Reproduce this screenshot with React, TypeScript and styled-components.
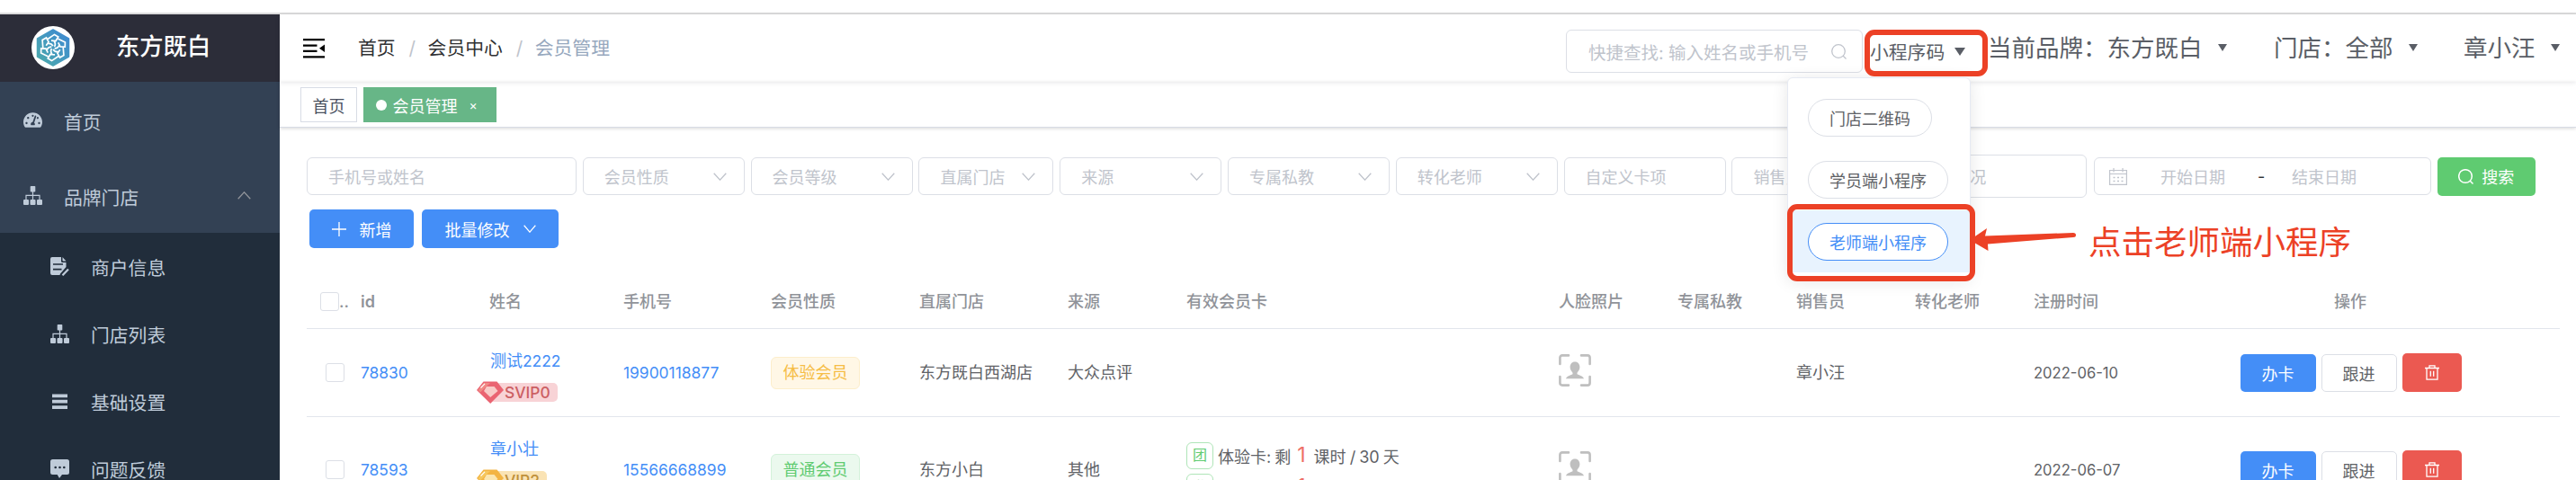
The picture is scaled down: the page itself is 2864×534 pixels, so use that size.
import type { ReactNode } from 'react';
import styled, { createGlobalStyle } from 'styled-components';
import { FaTachometerAlt } from 'react-icons/fa';

const GlobalStyle = createGlobalStyle`
  * {
    box-sizing: border-box;
  }
  body {
    margin: 0;
    background: #fff;
    font-family: Inter, 'Noto Sans CJK SC', sans-serif;
    font-size: 18px;
    color: #606266;
  }
  button {
    font-family: inherit;
  }
`;

const Page = styled.div`
  position: relative;
  width: 2864px;
  height: 534px;
  overflow: hidden;
  padding-top: 14px;
  white-space: nowrap;
`;

const Frame = styled.div`
  display: flex;
  height: 520px;
  border-top: 2px solid #dcdcdc;
`;

const Sidebar = styled.aside`
  width: 311px;
  flex: none;
  background: #212d3b;
`;

const Brand = styled.div`
  height: 75px;
  padding: 0 0 2px 35px;
  display: flex;
  align-items: center;
  gap: 46px;
  background: #2c2d39;
`;

const BrandName = styled.span`
  font-size: 26.3px;
  font-weight: 500;
  line-height: 36px;
  color: #fff;
  padding-bottom: 1px;
`;

const MenuItem = styled.div<{ $sub?: boolean }>`
  height: ${(p) => (p.$sub ? 75 : 84)}px;
  padding: 0 32px 0 ${(p) => (p.$sub ? 56 : 26)}px;
  display: flex;
  align-items: center;
  gap: 24px;
  background: ${(p) => (p.$sub ? '#212d3b' : '#334154')};
  color: #bfcbd9;
  font-size: 20.8px;

  svg {
    flex: none;
  }
`;

const MenuText = styled.span<{ $sub?: boolean }>`
  flex: 1;
  line-height: 30px;
  padding-top: ${(p) => (p.$sub ? 5 : 7)}px;
`;

const Main = styled.main`
  flex: 1;
  min-width: 0;
`;

const Navbar = styled.header`
  height: 75px;
  padding: 0 17px 0 26px;
  display: flex;
  align-items: center;
  box-shadow: 0 1px 5px rgba(0, 21, 41, 0.1);
`;

const Breadcrumb = styled.nav`
  display: flex;
  align-items: center;
  gap: 15px;
  margin-left: 37px;
  flex: 1;
  font-size: 20.8px;
  line-height: 30px;
  color: #303133;
`;

const Slash = styled.span`
  width: 6px;
  color: #c0c4cc;
  text-align: center;
`;

const Current = styled.span`
  color: #97a8be;
`;

const QuickSearch = styled.div`
  width: 330px;
  height: 48px;
  margin: 7px 8px 0 0;
  padding: 0 17px 0 24px;
  display: flex;
  align-items: center;
  justify-content: space-between;
  border: 1px solid #dcdfe6;
  border-radius: 6px;
  color: #c0c4cc;
  font-size: 19.5px;
`;

const CodeMenu = styled.div`
  position: relative;
  width: 131px;
  height: 48px;
  margin-top: 7px;
  display: flex;
  align-items: center;
  gap: 11px;
  font-size: 20.8px;
  color: #5a5e66;
`;

const Picker = styled.div<{ $width: number }>`
  width: ${(p) => p.$width}px;
  display: flex;
  align-items: center;
  gap: 17px;
  font-size: 26.5px;
  line-height: 38px;
  color: #5a5e66;
  padding-bottom: 2px;
`;

const Caret = styled.i<{ $size?: number }>`
  border: ${(p) => p.$size || 5.5}px solid transparent;
  border-top: ${(p) => (p.$size ? 9 : 8)}px solid currentColor;
  border-bottom: 0;
`;

const Dropdown = styled.div`
  position: absolute;
  z-index: 5;
  top: 53px;
  left: -92px;
  width: 204px;
  height: 224px;
  padding: 9px 0;
  display: flex;
  flex-direction: column;
  background: #fff;
  border: 1px solid #e6eaf3;
  border-radius: 6px;
  box-shadow: 0 3px 18px rgba(0, 0, 0, 0.1);
`;

const DropdownItem = styled.div<{ $active?: boolean }>`
  flex: none;
  height: 69px;
  padding: 14px 0 0 22px;
  background: ${(p) => (p.$active ? '#e8f3fe' : 'transparent')};
`;

const Pill = styled.button<{ $active?: boolean }>`
  display: block;
  height: 42px;
  padding: 0 23px 1px;
  border: 1px solid ${(p) => (p.$active ? '#448ef7' : '#dcdfe6')};
  border-radius: 21px;
  background: #fff;
  color: ${(p) => (p.$active ? '#448ef7' : '#606266')};
  font-size: 18px;
`;

const TagsBar = styled.div`
  height: 51px;
  padding: 6px 0 0 23px;
  display: flex;
  gap: 7px;
  border-bottom: 1px solid #d8dce5;
  box-shadow: 0 1px 4px rgba(0, 0, 0, 0.16);
`;

const Tag = styled.div<{ $active?: boolean }>`
  height: 39px;
  padding: 0 12.5px 0;
  display: flex;
  align-items: center;
  gap: 7px;
  border: 1px solid ${(p) => (p.$active ? '#67b687' : '#d8dce5')};
  background: ${(p) => (p.$active ? '#67b687' : '#fff')};
  color: ${(p) => (p.$active ? '#fff' : '#495060')};
`;

const Dot = styled.i`
  width: 12px;
  height: 12px;
  border-radius: 50%;
  background: #fff;
`;

const Close = styled.span`
  width: 23px;
  padding-left: 6px;
  font-size: 14px;
`;

const Filters = styled.div`
  height: 48px;
  margin: 30px 0 0 30px;
  display: flex;
  align-items: center;
  gap: 6.8px;
`;

const Field = styled.div<{ $width: number; $tall?: boolean }>`
  flex: none;
  width: ${(p) => p.$width}px;
  height: ${(p) => (p.$tall ? 48 : 42)}px;
  padding: 0 19px 0 23px;
  display: flex;
  align-items: center;
  justify-content: space-between;
  border: 1px solid #dcdfe6;
  border-radius: 6px;
  color: #c0c4cc;
`;

const DateRange = styled(Field)`
  justify-content: flex-start;
  margin-left: 1px;
  padding-left: 16px;
`;

const DateText = styled.span`
  padding-left: 37px;
`;

const Dash = styled.span`
  width: 38px;
  margin-left: 36px;
  color: #303133;
`;

const Button = styled.button<{ $kind?: 'primary' | 'success' | 'danger'; $width: number; $height?: number }>`
  width: ${(p) => p.$width}px;
  height: ${(p) => p.$height || 43}px;
  padding: 0;
  display: flex;
  align-items: center;
  justify-content: center;
  gap: 9px;
  border: ${(p) => (p.$kind ? 'none' : '1px solid #dcdfe6')};
  border-radius: 5px;
  background: ${(p) =>
    p.$kind === 'primary'
      ? '#448ef7'
      : p.$kind === 'success'
        ? '#5fcb71'
        : p.$kind === 'danger'
          ? '#eb5951'
          : '#fff'};
  color: ${(p) => (p.$kind ? '#fff' : '#606266')};
  font-size: 18px;
`;

const Actions = styled.div`
  display: flex;
  gap: 9px;
  margin: 13px 0 0 33px;

  button {
    gap: 15px;
  }
`;

const Table = styled.div`
  width: 2505px;
  margin: 30px 0 0 30px;
`;

const Row = styled.div<{ $height: number }>`
  height: ${(p) => p.$height}px;
  display: grid;
  grid-template-columns: 45px 143px 149px 164px 165px 165px 132px 414px 132px 132px 132px 132px 132px 468px;
  align-items: center;
  border-bottom: 1px solid #e2e5ec;
`;

const HeadRow = styled(Row)`
  font-weight: 500;
  color: #909399;
`;

const Cell = styled.div<{ $center?: boolean }>`
  padding-left: ${(p) => (p.$center ? 2 : 15)}px;
  text-align: ${(p) => (p.$center ? 'center' : 'left')};
  line-height: 28px;
`;

const IdLabel = styled.span`
  font-weight: 600;
`;

const CheckCell = styled.div<{ $left: number }>`
  display: flex;
  align-items: center;
  padding-left: ${(p) => p.$left}px;
`;

const Checkbox = styled.i`
  flex: none;
  width: 21px;
  height: 21px;
  border: 1px solid #dcdfe6;
  border-radius: 3px;
`;

const Digits = styled.span<{ $link?: boolean }>`
  font-size: ${(p) => (p.$link ? 17.4 : 16.6)}px;
  color: ${(p) => (p.$link ? '#448ef7' : 'inherit')};
`;

const NameCell = styled.div`
  align-self: start;
  padding: 22px 0 0 1px;
  display: flex;
  flex-direction: column;
  gap: 8px;
  color: #448ef7;
`;

const Name = styled.span`
  padding-left: 15px;
  line-height: 28px;
`;

const Badge = styled.div`
  display: flex;
  align-items: center;
  height: 25px;
`;

const BadgeText = styled.span<{ $gold: boolean }>`
  height: 21px;
  margin-left: -16px;
  padding: 0 8px 0 17px;
  border-radius: 5px;
  background: ${(p) => (p.$gold ? '#fae3b4' : '#f8d3d6')};
  color: ${(p) => (p.$gold ? '#c0913c' : '#cc5f63')};
  font-size: 17.4px;
  font-weight: 500;
  line-height: 21px;
`;

const Status = styled.span<{ $ok: boolean }>`
  display: block;
  width: 99px;
  height: 36px;
  border: 1px solid ${(p) => (p.$ok ? '#d3f2da' : '#fdeecb')};
  border-radius: 6px;
  background: ${(p) => (p.$ok ? '#ebf9ee' : '#fff7e6')};
  color: ${(p) => (p.$ok ? '#5fcb71' : '#f6bd45')};
  line-height: 34px;
  text-align: center;
`;

const CardLines = styled.div`
  align-self: start;
  padding: 28px 0 0 15px;
  display: flex;
  flex-direction: column;
  gap: 5px;
`;

const CardLine = styled.div`
  display: flex;
  align-items: center;
  height: 30px;
  word-spacing: -1px;
`;

const CardType = styled.span`
  width: 30px;
  height: 30px;
  margin-right: 5px;
  border: 1px solid #afe5b8;
  border-radius: 6px;
  color: #5fcb71;
  font-size: 16px;
  line-height: 27px;
  text-align: center;
`;

const Count = styled.b`
  margin: 0 9px 3px 7px;
  color: #ee6f68;
  font-size: 23px;
  font-weight: 400;
`;

const Operations = styled.div`
  display: flex;
  align-items: center;
  justify-content: center;
  gap: 6px;
  padding-left: 3px;
`;

const Marker = styled.div<{ $x: number; $y: number; $w: number; $h: number }>`
  position: absolute;
  z-index: 6;
  left: ${(p) => p.$x}px;
  top: ${(p) => p.$y}px;
  width: ${(p) => p.$w}px;
  height: ${(p) => p.$h}px;
  border: 6px solid #ec4126;
  border-radius: 11px;
`;

const Pointer = styled.svg`
  position: absolute;
  z-index: 7;
  left: 2188px;
  top: 250px;
`;

const Note = styled.div`
  position: absolute;
  left: 2322px;
  top: 246px;
  font-size: 36.5px;
  line-height: 48px;
  color: #ec4126;
`;

const Logo = () => (
  <svg width="48" height="48" viewBox="-24 -24 48 48">
    <defs>
      <linearGradient id="logo" x1="0" y1="1" x2="1" y2="0">
        <stop offset="0.1" stopColor="#4ba8ae" />
        <stop offset="0.9" stopColor="#3f8bd0" />
      </linearGradient>
    </defs>
    <circle r="24" fill="#fff" />
    <path d="M0-20 17.5-10V10L0 20-17.5 10V-10Z" fill="url(#logo)" stroke="url(#logo)" strokeWidth="1.5" strokeLinejoin="round" />
    {[0, 60, 120, 180, 240, 300].map((a) => (
      <path
        key={a}
        d="M-6-9.5 1.5-14.6 5.8-12 3-7.5-2-7.8M1.5-1Q3.5-4 1-7.5"
        transform={`rotate(${a})`}
        fill="none"
        stroke="#fff"
        strokeWidth="1.7"
      />
    ))}
  </svg>
);

const Sitemap = () => (
  <svg width="21" height="21" viewBox="0 0 21 21" fill="currentColor">
    <rect x="7.7" width="5.6" height="6.5" rx="0.8" />
    <rect y="15" width="6" height="6" rx="1" />
    <rect x="7.5" y="15" width="6" height="6" rx="1" />
    <rect x="15" y="15" width="6" height="6" rx="1" />
    <path d="M10.5 6v9M3 15v-4.6h15V15" fill="none" stroke="currentColor" strokeWidth="1.2" />
  </svg>
);

const DocEdit = () => (
  <svg width="21" height="21" viewBox="0 0 21 21">
    <path d="M2 0H12V4.5Q12 6 13.5 6H17.5V11L11 18.5 10.5 20H2Q0 20 0 18V2Q0 0 2 0Z" fill="currentColor" />
    <path d="M13.5 0 17.5 4.5H14.5Q13.5 4.5 13.5 3.5Z" fill="currentColor" />
    <path d="M3 8H14M3 13.7H12.5" stroke="#212d3b" strokeWidth="1.7" />
    <path d="M20 13.5 13.5 20.3" stroke="currentColor" strokeWidth="2.2" />
  </svg>
);

const Bars = () => (
  <svg width="21" height="21" viewBox="0 0 21 21" fill="currentColor">
    <path d="M2 2.5h17v3.8H2zM2 8.8h17v3.8H2zM2 15.2h17V19H2z" />
  </svg>
);

const Comment = () => (
  <svg width="21" height="21" viewBox="0 0 21 21">
    <path d="M2.5 0h16Q21 0 21 2.5v12Q21 17 18.5 17H13l-3 4-2.3-4H2.5Q0 17 0 14.5v-12Q0 0 2.5 0Z" fill="currentColor" />
    <g fill="#212d3b">
      <circle cx="5.7" cy="9" r="1.3" />
      <circle cx="10.5" cy="9" r="1.3" />
      <circle cx="15.3" cy="9" r="1.3" />
    </g>
  </svg>
);

const Hamburger = () => (
  <svg width="24" height="22" viewBox="0 0 24 22" fill="#000">
    <path d="M0 0h24v2.2H0zM0 6.5h15.5v2.2H0zM0 12.7h15.5v2.2H0zM0 19.3h24v2.2H0zM24 6.5v8.4L18 10.7z" />
  </svg>
);

const Chevron = ({ up, size = 15 }: { up?: boolean; size?: number }) => (
  <svg width={size} height="9" viewBox="0 0 15 9" preserveAspectRatio="none">
    <path
      d={up ? 'M.7 8.3 7.5.8 14.3 8.3' : 'M.7.7 7.5 8.2 14.3.7'}
      fill="none"
      stroke={up ? '#909399' : 'currentColor'}
      strokeWidth="1.3"
    />
  </svg>
);

const Magnifier = ({ stroke = 1.3 }: { stroke?: number }) => (
  <svg width="17" height="17" viewBox="0 0 17 17" fill="none" stroke="currentColor" strokeWidth={stroke}>
    <circle cx="8" cy="8" r="7.3" />
    <path d="M13 13 16.5 16.5" />
  </svg>
);

const Calendar = () => (
  <svg width="20" height="19" viewBox="0 0 20 19" fill="none" stroke="currentColor" strokeWidth="1.2">
    <path d="M.6 2.5h18.8v15.8H.6zM.6 6.5h18.8M5 0v4.5M15 0v4.5" />
    <path d="M4.5 10.5h11M4.5 14.5h11" strokeDasharray="2 2.5" strokeWidth="1.5" />
  </svg>
);

const Plus = () => (
  <svg width="16" height="16" viewBox="0 0 16 16" stroke="currentColor" strokeWidth="1.3">
    <path d="M8 0v16M0 8h16" />
  </svg>
);

const Trash = () => (
  <svg width="16" height="17" viewBox="0 0 16 17" fill="none" stroke="currentColor" strokeWidth="1.3">
    <path d="M0 3.5h16M5 3.5V.8h6v2.7M2 3.5v12.6h12V3.5M6.3 6.8v6M9.7 6.8v6" />
  </svg>
);

const FaceIcon = styled.svg`
  display: block;
`;

const Face = () => (
  <FaceIcon width="36" height="36" viewBox="0 0 36 36">
    <path
      d="M11 1.4H4Q1.4 1.4 1.4 4v7M25 1.4h7Q34.6 1.4 34.6 4v7M11 34.6H4Q1.4 34.6 1.4 32v-7M25 34.6h7Q34.6 34.6 34.6 32v-7"
      fill="none"
      stroke="#bfbfbf"
      strokeWidth="2.6"
      strokeLinecap="round"
    />
    <path
      d="M18 8.5c3.5 0 5.4 2.7 5.4 6 0 2.5-1.5 4.5-2.9 6.2v1.500c3 1.400 6.500 2 7.500 5H8c1-3 4.500-3.600 7.500-5v-1.500c-1.400-1.700-2.900-3.700-2.900-6.200 0-3.300 1.900-6 5.400-6z"
      fill="#bfbfbf"
    />
  </FaceIcon>
);

const FaceCell = styled.div`
  padding: 0 0 6px 15px;
`;

// sits above the pill that is pulled under it
const DiamondIcon = styled.svg`
  position: relative;
  flex: none;
`;

const Diamond = ({ gold }: { gold: boolean }) => (
  <DiamondIcon width="30" height="25" viewBox="0 0 30 25">
    <path d="M7.5.5h15L30 10 15.2 25 0 10Z" fill={gold ? '#f3b443' : '#ea6472'} />
    <path d="M8 2h7L4 12.5 1.5 10Z" fill={gold ? '#f6c75e' : '#f08a84'} />
    <path d="M11 6h8.5l4 5-8.3 7-7.2-7Z" fill={gold ? '#fbe6b0' : '#f8cbc8'} />
    <path d="M4.5 7.5 9 2.8" stroke="#fff" strokeWidth="1.2" />
  </DiamondIcon>
);

const menu: { label: string; icon: ReactNode; sub?: boolean; open?: boolean }[] = [
  { label: '首页', icon: <FaTachometerAlt size={21} /> },
  { label: '品牌门店', icon: <Sitemap />, open: true },
  { label: '商户信息', icon: <DocEdit />, sub: true },
  { label: '门店列表', icon: <Sitemap />, sub: true },
  { label: '基础设置', icon: <Bars />, sub: true },
  { label: '问题反馈', icon: <Comment />, sub: true },
];

const filters = [
  { label: '手机号或姓名', width: 300 },
  { label: '会员性质', width: 180, select: true },
  { label: '会员等级', width: 180, select: true },
  { label: '直属门店', width: 150, select: true },
  { label: '来源', width: 180, select: true },
  { label: '专属私教', width: 180, select: true },
  { label: '转化老师', width: 180, select: true },
  { label: '自定义卡项', width: 180 },
  { label: '销售员', width: 180, select: true },
  { label: '跟进情况', width: 208, tall: true },
];

const columns = [
  '姓名',
  '手机号',
  '会员性质',
  '直属门店',
  '来源',
  '有效会员卡',
  '人脸照片',
  '专属私教',
  '销售员',
  '转化老师',
  '注册时间',
];

const members = [
  {
    id: '78830',
    name: '测试',
    suffix: '2222',
    level: 'SVIP0',
    phone: '19900118877',
    status: '体验会员',
    store: '东方既白西湖店',
    source: '大众点评',
    cards: [],
    sales: '章小汪',
    date: '2022-06-10',
    height: 98,
  },
  {
    id: '78593',
    name: '章小壮',
    suffix: '',
    level: 'VIP2',
    phone: '15566668899',
    status: '普通会员',
    store: '东方小白',
    source: '其他',
    cards: [
      { type: '团', name: '体验卡', count: 1, days: 30 },
      { type: '私', name: '会员卡', count: 1, days: 60 },
    ],
    sales: '',
    date: '2022-06-07',
    height: 118,
  },
];

function App() {
  return (
    <Page>
      <GlobalStyle />
      <Frame>
        <Sidebar>
          <Brand>
            <Logo />
            <BrandName>东方既白</BrandName>
          </Brand>
          {menu.map((item) => (
            <MenuItem key={item.label} $sub={item.sub}>
              {item.icon}
              <MenuText $sub={item.sub}>{item.label}</MenuText>
              {item.open && <Chevron up />}
            </MenuItem>
          ))}
        </Sidebar>
        <Main>
          <Navbar>
            <Hamburger />
            <Breadcrumb>
              <span>首页</span>
              <Slash>/</Slash>
              <span>会员中心</span>
              <Slash>/</Slash>
              <Current>会员管理</Current>
            </Breadcrumb>
            <QuickSearch>
              快捷查找: 输入姓名或手机号
              <Magnifier />
            </QuickSearch>
            <CodeMenu>
              小程序码
              <Caret $size={6.5} />
              <Dropdown>
                <DropdownItem>
                  <Pill>门店二维码</Pill>
                </DropdownItem>
                <DropdownItem>
                  <Pill>学员端小程序</Pill>
                </DropdownItem>
                <DropdownItem $active>
                  <Pill $active>老师端小程序</Pill>
                </DropdownItem>
              </Dropdown>
            </CodeMenu>
            <Picker $width={318}>
              当前品牌：东方既白
              <Caret />
            </Picker>
            <Picker $width={211}>
              门店：全部
              <Caret />
            </Picker>
            <Picker $width={108}>
              章小汪
              <Caret />
            </Picker>
          </Navbar>
          <TagsBar>
            <Tag>首页</Tag>
            <Tag $active>
              <Dot />
              会员管理
              <Close>×</Close>
            </Tag>
          </TagsBar>
          <Filters>
            {filters.map((f) => (
              <Field key={f.label} $width={f.width} $tall={f.tall}>
                {f.label}
                {f.select && <Chevron />}
              </Field>
            ))}
            <DateRange $width={375}>
              <Calendar />
              <DateText>开始日期</DateText>
              <Dash>-</Dash>
              结束日期
            </DateRange>
            <Button $kind="success" $width={109}>
              <Magnifier stroke={1.5} />
              搜索
            </Button>
          </Filters>
          <Actions>
            <Button $kind="primary" $width={116}>
              <Plus />
              新增
            </Button>
            <Button $kind="primary" $width={152}>
              批量修改
              <Chevron size={14} />
            </Button>
          </Actions>
          <Table>
            <HeadRow $height={60}>
              <CheckCell $left={15}>
                <Checkbox />
                ..
              </CheckCell>
              <Cell>
                <IdLabel>id</IdLabel>
              </Cell>
              {columns.map((c) => (
                <Cell key={c}>{c}</Cell>
              ))}
              <Cell $center>操作</Cell>
            </HeadRow>
            {members.map((m) => (
              <Row key={m.id} $height={m.height}>
                <CheckCell $left={21}>
                  <Checkbox />
                </CheckCell>
                <Cell>
                  <Digits $link>{m.id}</Digits>
                </Cell>
                <NameCell>
                  <Name>
                    {m.name}
                    <Digits $link>{m.suffix}</Digits>
                  </Name>
                  <Badge>
                    <Diamond gold={m.level === 'VIP2'} />
                    <BadgeText $gold={m.level === 'VIP2'}>{m.level}</BadgeText>
                  </Badge>
                </NameCell>
                <Cell>
                  <Digits $link>{m.phone}</Digits>
                </Cell>
                <Cell>
                  <Status $ok={m.status === '普通会员'}>{m.status}</Status>
                </Cell>
                <Cell>{m.store}</Cell>
                <Cell>{m.source}</Cell>
                <CardLines>
                  {m.cards.map((c) => (
                    <CardLine key={c.name}>
                      <CardType>{c.type}</CardType>
                      {c.name}: 剩<Count>{c.count}</Count>课时 / {c.days} 天
                    </CardLine>
                  ))}
                </CardLines>
                <FaceCell>
                  <Face />
                </FaceCell>
                <Cell />
                <Cell>{m.sales}</Cell>
                <Cell />
                <Cell>
                  <Digits>{m.date}</Digits>
                </Cell>
                <Operations>
                  <Button $kind="primary" $width={84} $height={42}>
                    办卡
                  </Button>
                  <Button $width={84} $height={42}>
                    跟进
                  </Button>
                  <Button $kind="danger" $width={66}>
                    <Trash />
                  </Button>
                </Operations>
              </Row>
            ))}
          </Table>
        </Main>
      </Frame>
      <Marker $x={2073} $y={33} $w={137} $h={52} />
      <Marker $x={1987} $y={227} $w={209} $h={86} />
      <Pointer width="122" height="34" viewBox="0 0 122 34">
        <path d="M2 17 21 4 19 12.5 117 9Q120 9 120 11.5 120 14 117 14L22 21.5 22.5 29Z" fill="#ec4126" />
      </Pointer>
      <Note>点击老师端小程序</Note>
    </Page>
  );
}

export default App;
